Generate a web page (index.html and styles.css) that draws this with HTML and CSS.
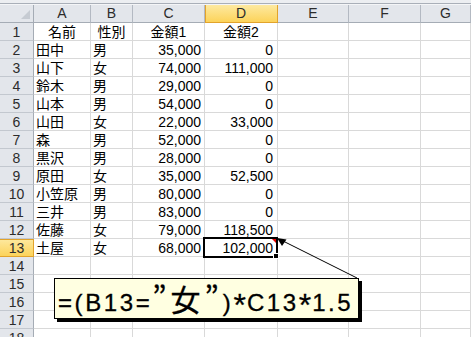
FILE: index.html
```html
<!DOCTYPE html>
<html lang="ja">
<head>
<meta charset="utf-8">
<title>Sheet</title>
<link rel="stylesheet" href="styles.css">
</head>
<body>
<div class="page">
  <div class="topbar"></div>
  <div class="sheet">
    <div class="corner"><span class="corner-tri"></span></div>
    <div class="ch">A</div><div class="ch">B</div><div class="ch">C</div><div class="ch ch-sel">D</div><div class="ch">E</div><div class="ch">F</div><div class="ch">G</div>

    <div class="rh">1</div><div class="c ctr">名前</div><div class="c ctr">性別</div><div class="c ctr">金額1</div><div class="c ctr">金額2</div><div class="c"></div><div class="c"></div><div class="c"></div>
    <div class="rh">2</div><div class="c">田中</div><div class="c">男</div><div class="c num">35,000</div><div class="c num2">0</div><div class="c"></div><div class="c"></div><div class="c"></div>
    <div class="rh">3</div><div class="c">山下</div><div class="c">女</div><div class="c num">74,000</div><div class="c num2">111,000</div><div class="c"></div><div class="c"></div><div class="c"></div>
    <div class="rh">4</div><div class="c">鈴木</div><div class="c">男</div><div class="c num">29,000</div><div class="c num2">0</div><div class="c"></div><div class="c"></div><div class="c"></div>
    <div class="rh">5</div><div class="c">山本</div><div class="c">男</div><div class="c num">54,000</div><div class="c num2">0</div><div class="c"></div><div class="c"></div><div class="c"></div>
    <div class="rh">6</div><div class="c">山田</div><div class="c">女</div><div class="c num">22,000</div><div class="c num2">33,000</div><div class="c"></div><div class="c"></div><div class="c"></div>
    <div class="rh">7</div><div class="c">森</div><div class="c">男</div><div class="c num">52,000</div><div class="c num2">0</div><div class="c"></div><div class="c"></div><div class="c"></div>
    <div class="rh">8</div><div class="c">黒沢</div><div class="c">男</div><div class="c num">28,000</div><div class="c num2">0</div><div class="c"></div><div class="c"></div><div class="c"></div>
    <div class="rh">9</div><div class="c">原田</div><div class="c">女</div><div class="c num">35,000</div><div class="c num2">52,500</div><div class="c"></div><div class="c"></div><div class="c"></div>
    <div class="rh">10</div><div class="c">小笠原</div><div class="c">男</div><div class="c num">80,000</div><div class="c num2">0</div><div class="c"></div><div class="c"></div><div class="c"></div>
    <div class="rh">11</div><div class="c">三井</div><div class="c">男</div><div class="c num">83,000</div><div class="c num2">0</div><div class="c"></div><div class="c"></div><div class="c"></div>
    <div class="rh">12</div><div class="c">佐藤</div><div class="c">女</div><div class="c num">79,000</div><div class="c num2">118,500</div><div class="c"></div><div class="c"></div><div class="c"></div>
    <div class="rh rh-sel">13</div><div class="c">土屋</div><div class="c">女</div><div class="c num">68,000</div><div class="c num2 active">102,000<span class="sel-box"></span><span class="comment-tri"></span><span class="fill-handle"></span></div><div class="c"></div><div class="c"></div><div class="c"></div>
    <div class="rh">14</div><div class="c"></div><div class="c"></div><div class="c"></div><div class="c"></div><div class="c"></div><div class="c"></div><div class="c"></div>
    <div class="rh">15</div><div class="c"></div><div class="c"></div><div class="c"></div><div class="c"></div><div class="c"></div><div class="c"></div><div class="c"></div>
    <div class="rh">16</div><div class="c"></div><div class="c"></div><div class="c"></div><div class="c"></div><div class="c"></div><div class="c"></div><div class="c"></div>
    <div class="rh">17</div><div class="c"></div><div class="c"></div><div class="c"></div><div class="c"></div><div class="c"></div><div class="c"></div><div class="c"></div>
    <div class="rh">18</div><div class="c"></div><div class="c"></div><div class="c"></div><div class="c"></div><div class="c"></div><div class="c"></div><div class="c"></div>
  </div>

  <svg class="arrow" width="471" height="337" viewBox="0 0 471 337">
    <line x1="357" y1="278" x2="283" y2="241" stroke="#000" stroke-width="1"/>
    <polygon points="277,238 286.5,239.5 282,246" fill="#000"/>
  </svg>

  <div class="callout">=(B13=<span class="jp">”女”</span>)<span class="ast">*</span>C13<span class="ast">*</span>1.5</div>
</div>
</body>
</html>
```

FILE: styles.css
```css
* { box-sizing: border-box; }

html, body {
  margin: 0;
  padding: 0;
  background: #ffffff;
}

.page {
  position: relative;
  width: 471px;
  height: 337px;
  overflow: hidden;
  font-family: "Liberation Sans", "Noto Sans CJK JP", sans-serif;
  font-size: 14px;
  color: #000;
}

.topbar {
  height: 5px;
  background: #eceef1;
  border-top: 3px solid #eceef1;
  border-bottom: 1px solid #f4f5f7;
  box-shadow: inset 0 -1px 0 #a9afb8;
}

.sheet {
  display: grid;
  grid-template-columns: 34px 57px 42px 72px 73px 71px 72px 1fr;
  grid-auto-rows: 18px;
}

.corner {
  position: relative;
  background: #e3e6eb;
  border-right: 1px solid #a5acb5;
  border-bottom: 1px solid #a5acb5;
}

.corner-tri {
  position: absolute;
  right: 3px;
  bottom: 3px;
  width: 0;
  height: 0;
  border-left: 9px solid transparent;
  border-bottom: 9px solid #c6cbd2;
}

.ch {
  background: #e3e6eb;
  border-right: 1px solid #b3b9c2;
  border-bottom: 1px solid #a5acb5;
  text-align: center;
  line-height: 15px;
  padding-top: 1px;
  color: #2c2c2c;
}

.ch-sel {
  background: linear-gradient(#fde9a0, #fcd35a);
  border-right: 1px solid #e2a32b;
  border-bottom: 1px solid #e2a32b;
  box-shadow: inset 1px 0 0 #e2a32b;
}

.rh {
  background: #e3e6eb;
  border-right: 1px solid #a5acb5;
  border-bottom: 1px solid #c3c8cf;
  text-align: center;
  line-height: 15px;
  padding-top: 2px;
  color: #2c2c2c;
}

.rh-sel {
  background: linear-gradient(#fde9a0, #fcd35a);
  border-right: 1px solid #e2a32b;
  border-bottom: 1px solid #e2a32b;
  box-shadow: inset 0 1px 0 #e2a32b;
}

.c {
  border-right: 1px solid #d9d9d9;
  border-bottom: 1px solid #d9d9d9;
  line-height: 15px;
  padding: 2px 2px 0 2px;
  white-space: nowrap;
}

.ctr { text-align: center; }
.num { text-align: right; padding-right: 3px; }
.num2 { text-align: right; padding-right: 4px; }

.active { position: relative; }

.sel-box {
  position: absolute;
  left: -2px;
  top: -2px;
  width: 75px;
  height: 21px;
  border: 2px solid #000;
}

.comment-tri {
  position: absolute;
  right: 1px;
  top: 0;
  width: 0;
  height: 0;
  border-left: 4px solid transparent;
  border-top: 4px solid #e00000;
}

.fill-handle {
  position: absolute;
  right: -2px;
  bottom: -3px;
  width: 6px;
  height: 6px;
  background: #000;
  border: 1px solid #fff;
}

.arrow {
  position: absolute;
  left: 0;
  top: 0;
  pointer-events: none;
}

.callout {
  position: absolute;
  left: 54px;
  top: 278px;
  width: 305px;
  height: 41px;
  background: #ffffe1;
  border: 1px solid #000;
  box-shadow: 3px 3px 0 #000;
  font-family: "Liberation Sans", "Noto Sans CJK JP", sans-serif;
  font-size: 24px;
  line-height: 27px;
  padding: 6px 0 0 3px;
  letter-spacing: 2.6px;
  white-space: nowrap;
  -webkit-text-stroke: 0.3px #000;
}

.jp {
  font-family: "Noto Sans CJK JP", sans-serif;
  font-size: 30px;
  letter-spacing: 4px;
}

.ast {
  font-size: 32px;
  vertical-align: -5px;
  letter-spacing: 1px;
}
```
